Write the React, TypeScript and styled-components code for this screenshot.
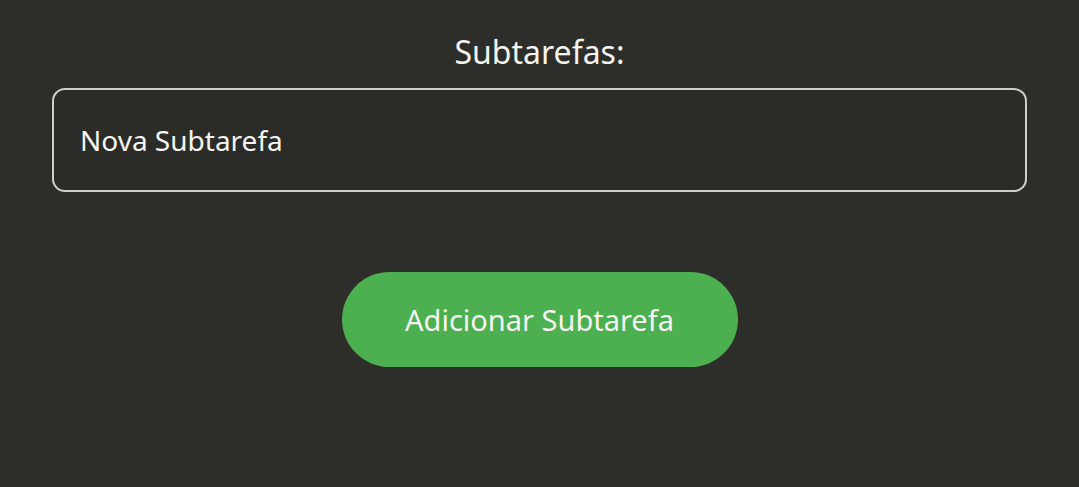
import React, {useState} from 'react';
import styled, {createGlobalStyle} from 'styled-components';

const GlobalStyle = createGlobalStyle`
    html, body {
        margin: 0;
        padding: 0;
        background-color: #2d2e2a;
    }
`;

const App = () => {
    const [subtask, setSubtask] = useState('');

    return (
        <>
            <GlobalStyle/>
            <Container>
                <Title>Subtarefas:</Title>
                <Input
                    placeholder="Nova Subtarefa"
                    value={subtask}
                    onChange={(e) => setSubtask(e.target.value)}
                />
                <AddButton onClick={() => setSubtask('')}>Adicionar Subtarefa</AddButton>
            </Container>
        </>
    );
};

const Container = styled.div`
    display: flex;
    flex-direction: column;
    align-items: center;
    height: 487px;
    padding: 30px 52px 0;
    box-sizing: border-box;
    background-color: #2d2e2a;
    font-family: "Noto Sans", "Open Sans", sans-serif;
`;

const Title = styled.h2`
    margin: 0 0 14px;
    font-size: 32px;
    font-weight: 400;
    line-height: 44px;
    color: #f4f4f0;
`;

const Input = styled.input`
    width: 100%;
    height: 104px;
    box-sizing: border-box;
    padding: 0 26px;
    font-family: inherit;
    font-size: 28px;
    color: #f4f4f0;
    background-color: #2b2c28;
    border: 2px solid #cfcfca;
    border-radius: 13px;
    outline: none;

    &::placeholder {
        color: #f4f4f0;
        opacity: 1;
    }
`;

const AddButton = styled.button`
    margin-top: 80px;
    width: 396px;
    height: 95px;
    font-family: inherit;
    font-size: 29px;
    color: #f4f4f0;
    background-color: #4caf50;
    border: none;
    border-radius: 48px;
    cursor: pointer;
`;

export default App;
